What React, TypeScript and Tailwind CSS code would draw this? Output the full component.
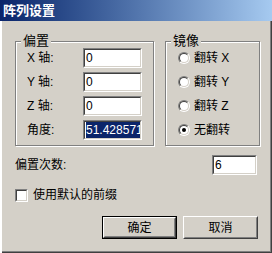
import React from "react";

function Field({ children }: { children?: React.ReactNode }) {
  return (
    <div className="flex h-[20px] border border-t-[#808080] border-l-[#808080] border-r-white border-b-white">
      <div className="flex flex-1 items-center overflow-hidden whitespace-nowrap border border-t-[#404040] border-l-[#404040] border-r-[#d4d0c8] border-b-[#d4d0c8] bg-white pl-[1px] text-[12px] text-black">
        {children}
      </div>
    </div>
  );
}

function Radio({ checked }: { checked?: boolean }) {
  return (
    <div className="flex h-[12px] w-[12px] shrink-0 rounded-full border border-t-[#808080] border-l-[#808080] border-r-white border-b-white">
      <div className="flex flex-1 items-center justify-center rounded-full border border-t-[#404040] border-l-[#404040] border-r-[#d4d0c8] border-b-[#d4d0c8] bg-white">
        {checked && <div className="h-[4px] w-[4px] rounded-full bg-black" />}
      </div>
    </div>
  );
}

function Button({ label, def }: { label: string; def?: boolean }) {
  const inner = (
    <div className="flex flex-1 border border-t-white border-l-white border-r-[#404040] border-b-[#404040]">
      <div className="flex flex-1 items-center justify-center border border-t-[#d4d0c8] border-l-[#d4d0c8] border-r-[#808080] border-b-[#808080] text-[12px] text-black">
        {label}
      </div>
    </div>
  );
  return def ? (
    <div className="flex h-[23px] w-[75px] border border-black">{inner}</div>
  ) : (
    <div className="flex h-[23px] w-[75px]">{inner}</div>
  );
}

function Group({ title, className, children }: { title: string; className: string; children: React.ReactNode }) {
  return (
    <div className={"relative border border-[#808080] shadow-[1px_1px_0_#fff,inset_1px_1px_0_#fff] " + className}>
      <div className="absolute -top-[8px] left-[5px] bg-[#d4d0c8] px-[2px] text-[13px] leading-[14px] text-black">{title}</div>
      {children}
    </div>
  );
}

export default function App() {
  const rows = ["X 轴:", "Y 轴:", "Z 轴:"];
  const radios = ["翻转 X", "翻转 Y", "翻转 Z"];
  return (
    <div className="flex h-[253px] w-[272px] flex-col bg-[#d4d0c8] font-['Liberation_Sans','Noto_Sans_CJK_SC',sans-serif] shadow-[inset_2px_0_0_#fff,inset_-1px_-1px_0_#404040,inset_-2px_-2px_0_#808080]">
      <div className="flex h-[21px] shrink-0 items-center bg-linear-to-r from-[#0a246a] to-[#a6caf0] pl-[3px] text-[13px] font-bold text-white">
        阵列设置
      </div>
      <div className="mt-[20px] flex gap-[11px] pl-[15px]">
        <Group title="偏置" className="h-[105px] w-[139px]">
          <div className="flex flex-col gap-[4px] pl-[11px] pt-[6px]">
            {rows.map((r) => (
              <div key={r} className="flex h-[20px] items-center">
                <div className="w-[56px] text-[12px] text-black">{r}</div>
                <div className="w-[59px]">
                  <Field>0</Field>
                </div>
              </div>
            ))}
            <div className="flex h-[20px] items-center">
              <div className="w-[56px] text-[12px] text-black">角度:</div>
              <div className="w-[59px]">
                <Field>
                  <span className="bg-[#0a246a] leading-[16px] text-white">51.428571429</span>
                </Field>
              </div>
            </div>
          </div>
        </Group>
        <Group title="镜像" className="h-[105px] w-[95px]">
          <div className="flex flex-col gap-[4px] pl-[12px] pt-[6px]">
            {radios.map((r) => (
              <div key={r} className="flex h-[20px] items-center gap-[4px]">
                <Radio />
                <span className="text-[12px] text-black">{r}</span>
              </div>
            ))}
            <div className="flex h-[20px] items-center gap-[4px]">
              <Radio checked />
              <span className="text-[12px] text-black">无翻转</span>
            </div>
          </div>
        </Group>
      </div>
      <div className="mt-[9px] flex h-[20px] items-center justify-between pl-[15px] pr-[15px]">
        <span className="text-[12px] text-black">偏置次数:</span>
        <div className="w-[45px]">
          <Field>6</Field>
        </div>
      </div>
      <div className="mt-[11px] flex items-center gap-[5px] pl-[15px]">
        <div className="flex h-[13px] w-[13px] border border-t-[#808080] border-l-[#808080] border-r-white border-b-white">
          <div className="flex-1 border border-t-[#404040] border-l-[#404040] border-r-[#d4d0c8] border-b-[#d4d0c8] bg-white" />
        </div>
        <span className="text-[12px] text-black">使用默认的前缀</span>
      </div>
      <div className="mt-[12px] flex justify-end gap-[6px] pr-[14px]">
        <Button label="确定" def />
        <Button label="取消" />
      </div>
    </div>
  );
}
